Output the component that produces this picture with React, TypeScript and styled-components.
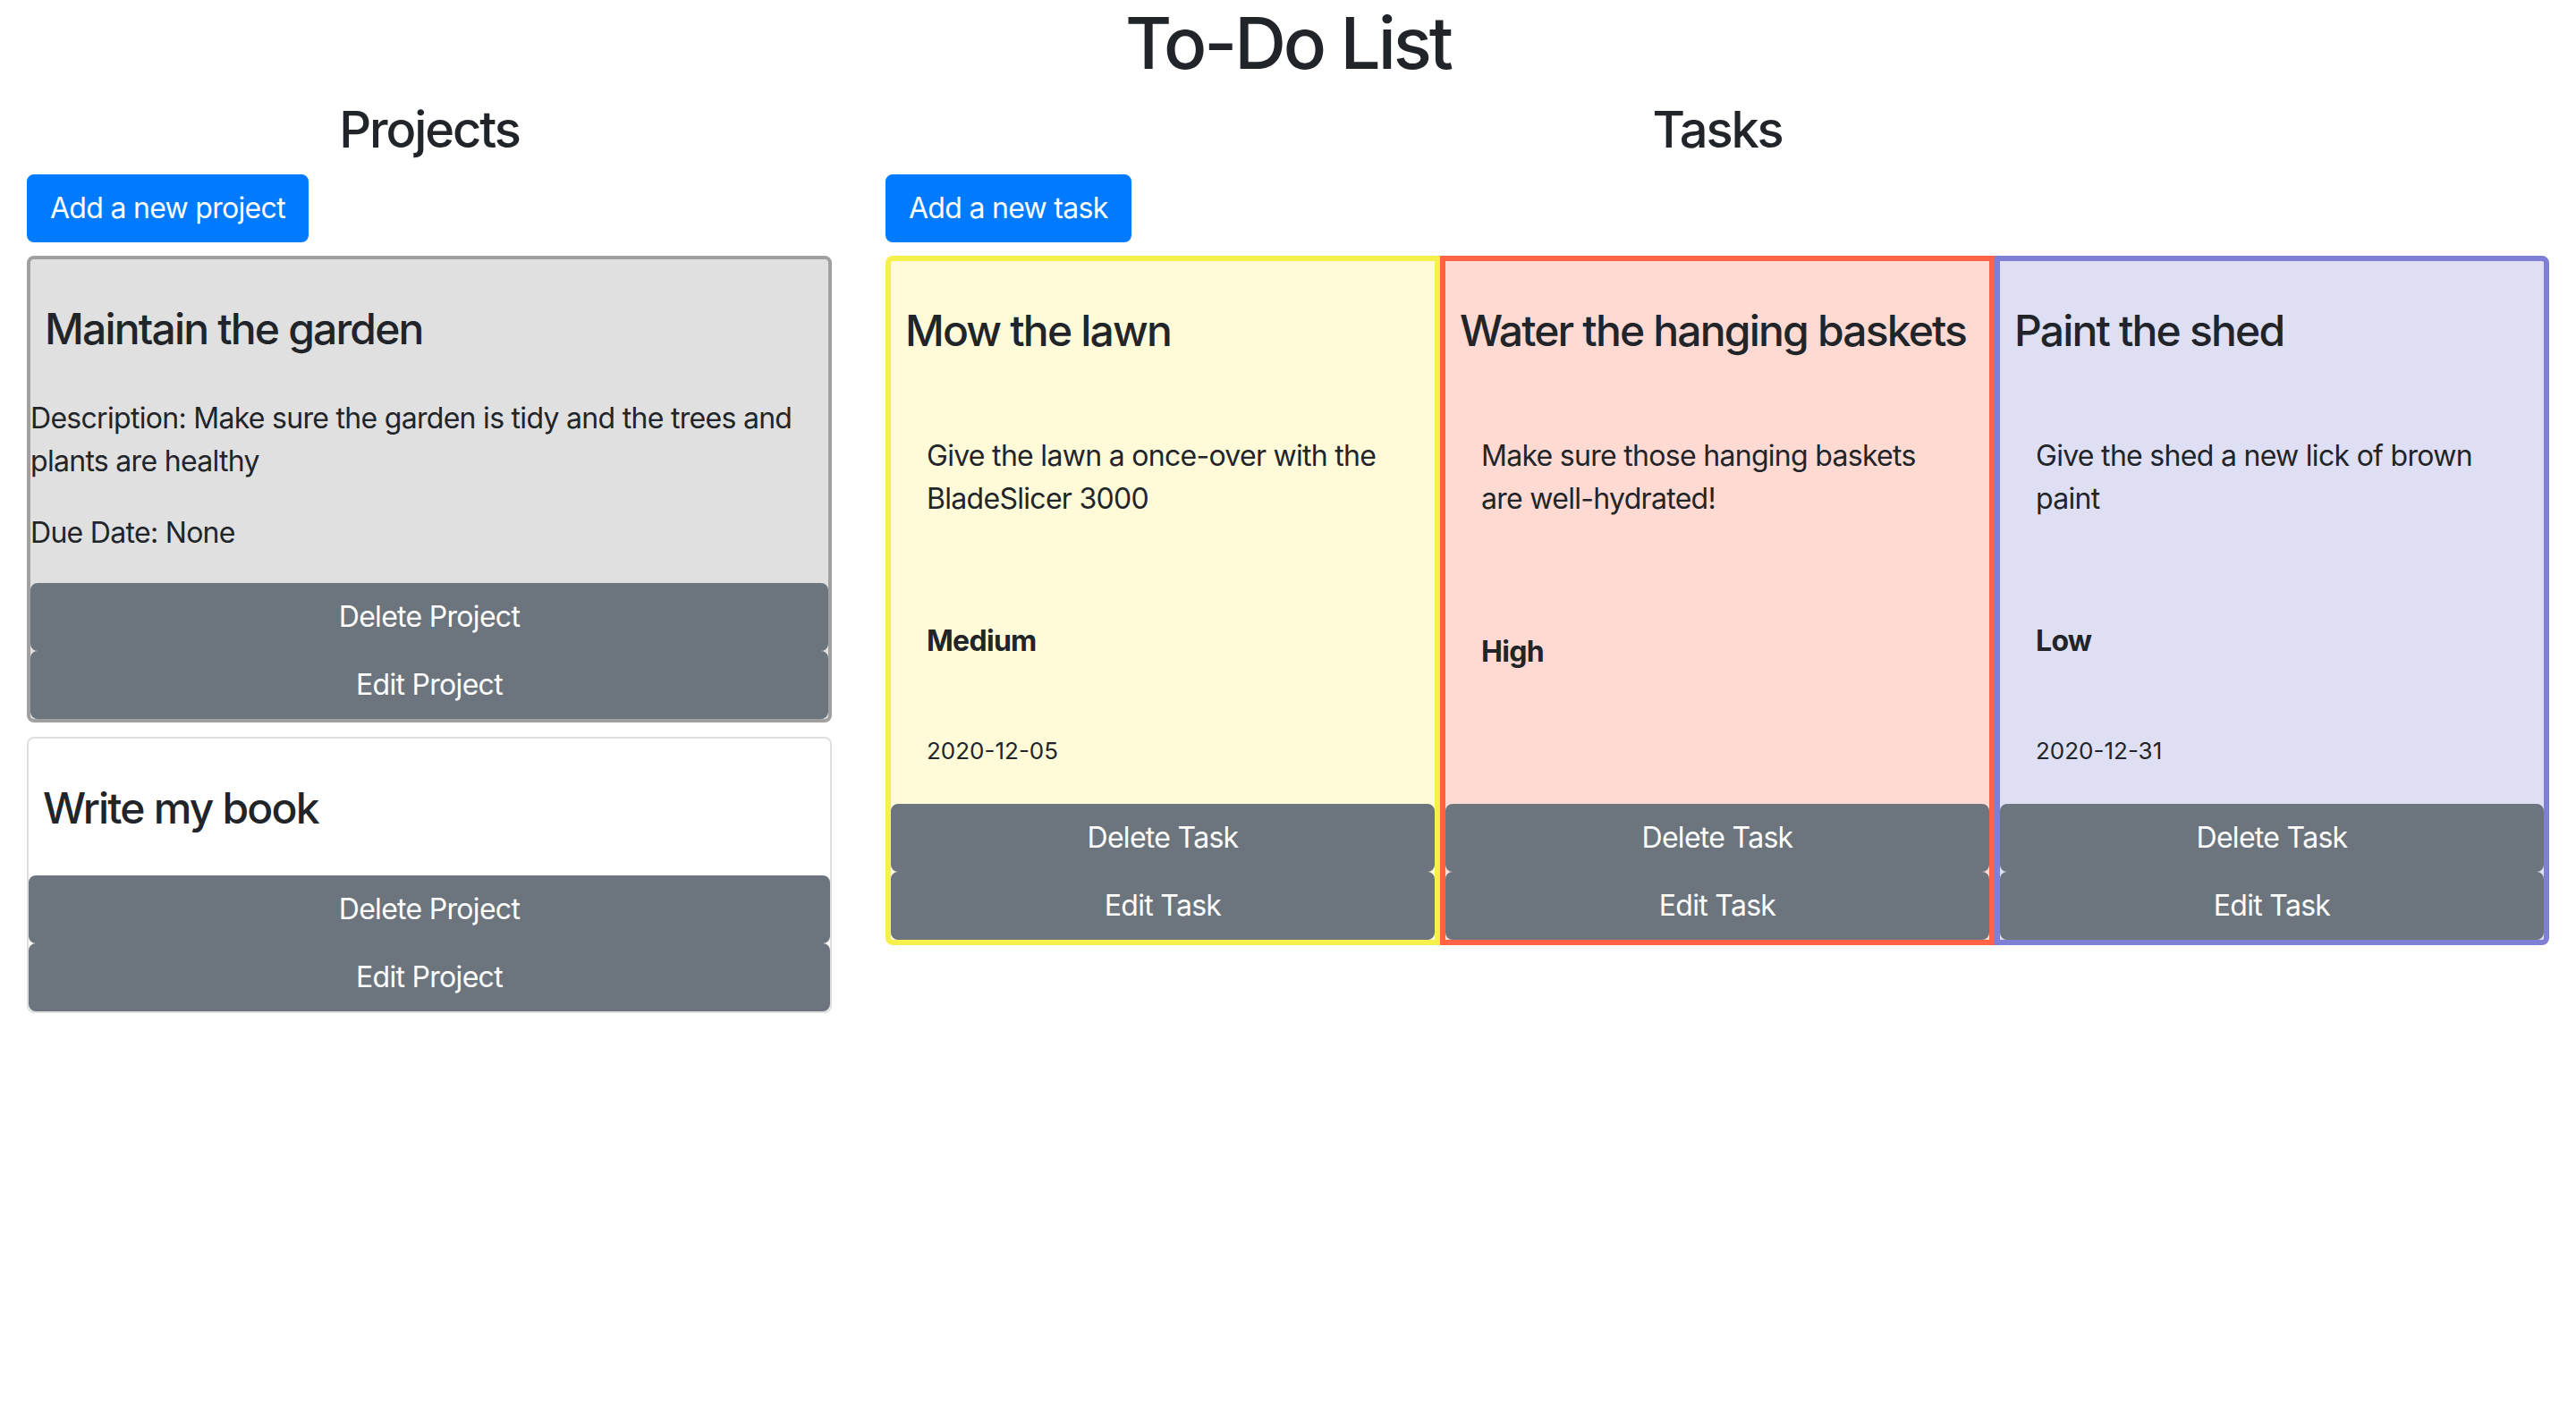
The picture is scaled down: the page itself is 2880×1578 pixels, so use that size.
import React from "react";
import styled, { createGlobalStyle, css } from "styled-components";

const GlobalStyle = createGlobalStyle`
  *, *::before, *::after { box-sizing: border-box; }
  html, body { margin: 0; padding: 0; background: #ffffff; }
  body {
    font-family: Inter, "Noto Sans", "Liberation Sans", sans-serif;
    font-size: 32px;
    line-height: 1.5;
    letter-spacing: -0.022em;
    color: #212529;
  }
`;

const Page = styled.div`
  width: 2880px;
`;

const headingText = css`
  font-weight: 500;
  line-height: 1.2;
  letter-spacing: -0.038em;
`;

const MainTitle = styled.h1`
  ${headingText}
  margin: 0 0 16px;
  font-size: 80px;
  text-align: center;
`;

const Row = styled.div`
  display: flex;
  align-items: flex-start;
`;

const Column = styled.section<{ $span: number }>`
  flex: 0 0 ${(p) => (p.$span / 12) * 100}%;
  padding: 0 30px;
`;

const SectionTitle = styled.h2`
  ${headingText}
  margin: 0 0 16px;
  font-size: 56px;
  text-align: center;
`;

const Toolbar = styled.div`
  display: flex;
  margin-bottom: 15px;
`;

const baseButton = css`
  font-family: inherit;
  font-size: 32px;
  line-height: 1.5;
  font-weight: 400;
  letter-spacing: -0.022em;
  color: #ffffff;
  padding: 12px 24px;
  border-radius: 8px;
  text-align: center;
  cursor: pointer;
`;

const PrimaryButton = styled.button`
  ${baseButton}
  background: #007bff;
  border: 2px solid #007bff;
`;

const ActionButton = styled.button`
  ${baseButton}
  display: block;
  width: 100%;
  background: #6c757d;
  border: 2px solid #6c757d;
`;

const ProjectList = styled.div`
  display: flex;
  flex-direction: column;
  gap: 16px;
`;

const ProjectCard = styled.article<{ $active?: boolean }>`
  display: flex;
  flex-direction: column;
  border-radius: 8px;
  border: ${(p) => (p.$active ? "4px solid #a0a0a0" : "2px solid #dfdfdf")};
  background: ${(p) => (p.$active ? "#e0e0e0" : "#ffffff")};
`;

const CardTitle = styled.h4`
  ${headingText}
  margin: 0 0 47px;
  padding: 49px 16px 0;
  font-size: 48px;
`;

const ProjectText = styled.p`
  margin: 0 0 32px;
`;

const TaskGroup = styled.div`
  display: flex;
  align-items: stretch;
`;

const TaskCard = styled.article<{ $border: string; $bg: string; $pos: "first" | "middle" | "last" }>`
  flex: 1 1 0;
  min-width: 0;
  display: flex;
  flex-direction: column;
  border: 6px solid ${(p) => p.$border};
  background: ${(p) => p.$bg};
  border-radius: ${(p) =>
    p.$pos === "first" ? "8px 0 0 8px" : p.$pos === "last" ? "0 8px 8px 0" : "0"};
`;

const TaskBody = styled.div`
  flex: 1;
  display: flex;
  flex-direction: column;
  padding: 40px;
`;

const TaskDescription = styled.p`
  margin: 0 0 32px;
`;

const TaskMeta = styled.div`
  flex: 1;
  display: flex;
  flex-direction: column;
`;

const Priority = styled.div`
  margin: auto 0;
  padding: 79px 0;
  font-weight: 700;
`;

const DueDate = styled.div<{ $empty?: boolean }>`
  font-size: 26px;
  line-height: 1.5;
  letter-spacing: 0;
  min-height: ${(p) => (p.$empty ? "14px" : "39px")};
`;

type Task = {
  title: string;
  description: string;
  priority: string;
  date?: string;
  border: string;
  bg: string;
};

const tasks: Task[] = [
  {
    title: "Mow the lawn",
    description: "Give the lawn a once-over with the BladeSlicer 3000",
    priority: "Medium",
    date: "2020-12-05",
    border: "#f5f04c",
    bg: "#fffbd9",
  },
  {
    title: "Water the hanging baskets",
    description: "Make sure those hanging baskets are well-hydrated!",
    priority: "High",
    border: "#ff6347",
    bg: "#ffdad3",
  },
  {
    title: "Paint the shed",
    description: "Give the shed a new lick of brown paint",
    priority: "Low",
    date: "2020-12-31",
    border: "#7f7fd5",
    bg: "#dfdff4",
  },
];

export default function App() {
  return (
    <Page>
      <GlobalStyle />
      <MainTitle>To-Do List</MainTitle>
      <Row>
        <Column $span={4}>
          <SectionTitle>Projects</SectionTitle>
          <Toolbar>
            <PrimaryButton>Add a new project</PrimaryButton>
          </Toolbar>
          <ProjectList>
            <ProjectCard $active>
              <CardTitle>Maintain the garden</CardTitle>
              <ProjectText>
                Description: Make sure the garden is tidy and the trees and plants are healthy
              </ProjectText>
              <ProjectText>Due Date: None</ProjectText>
              <ActionButton>Delete Project</ActionButton>
              <ActionButton>Edit Project</ActionButton>
            </ProjectCard>
            <ProjectCard>
              <CardTitle>Write my book</CardTitle>
              <ActionButton>Delete Project</ActionButton>
              <ActionButton>Edit Project</ActionButton>
            </ProjectCard>
          </ProjectList>
        </Column>
        <Column $span={8}>
          <SectionTitle>Tasks</SectionTitle>
          <Toolbar>
            <PrimaryButton>Add a new task</PrimaryButton>
          </Toolbar>
          <TaskGroup>
            {tasks.map((t, i) => (
              <TaskCard
                key={t.title}
                $border={t.border}
                $bg={t.bg}
                $pos={i === 0 ? "first" : i === tasks.length - 1 ? "last" : "middle"}
              >
                <CardTitle>{t.title}</CardTitle>
                <TaskBody>
                  <TaskDescription>{t.description}</TaskDescription>
                  <TaskMeta>
                    <Priority>{t.priority}</Priority>
                    <DueDate $empty={!t.date}>{t.date}</DueDate>
                  </TaskMeta>
                </TaskBody>
                <ActionButton>Delete Task</ActionButton>
                <ActionButton>Edit Task</ActionButton>
              </TaskCard>
            ))}
          </TaskGroup>
        </Column>
      </Row>
    </Page>
  );
}
